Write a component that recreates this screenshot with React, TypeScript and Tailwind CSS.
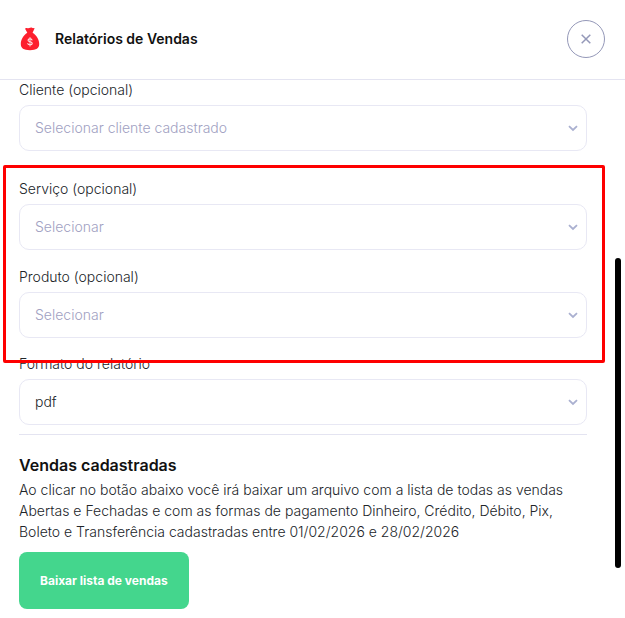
import { useState } from "react";

interface Field {
  id: string;
  label: string;
  placeholder?: string;
  options: string[];
}

const cliente: Field = {
  id: "cliente",
  label: "Cliente (opcional)",
  placeholder: "Selecionar cliente cadastrado",
  options: [],
};

const filtros: Field[] = [
  {
    id: "servico",
    label: "Serviço (opcional)",
    placeholder: "Selecionar",
    options: [],
  },
  {
    id: "produto",
    label: "Produto (opcional)",
    placeholder: "Selecionar",
    options: [],
  },
];

const formato: Field = {
  id: "formato",
  label: "Formato do relatório",
  options: ["pdf"],
};

const MoneyBag = () => (
  <svg viewBox="0 0 20 24" className="w-5 h-6 shrink-0" aria-hidden="true">
    <path
      fill="#fd1f2e"
      d="M5.6 1.2C7 .5 8 1.5 9.2 1.1c1.1-.4 1.8-.9 2.8-.3.6.3 1.1.5 1.900.2.5-.1.8.3.5.8l-1.800 4c4 2.600 6.600 7 6.600 11.200 0 4.200-2.900 6.200-9.200 6.200S.8 21.200.8 17c0-4.200 2.600-8.600 6.500-11.200L5.200 2c-.2-.4 0-.7.4-.8z"
    />
    <g fill="none" stroke="#ffe3e5" strokeWidth="1.100" strokeLinecap="round">
      <path d="M12 12.900c-.4-.7-1.100-1-2-1-1.200 0-2 .5-2 1.400 0 2.100 4.200.9 4.200 3 0 1-.9 1.500-2.200 1.500-1 0-1.800-.4-2.200-1.100" />
      <path d="M10 10.500v8.600" strokeWidth="0.900" />
    </g>
  </svg>
);

const SelectField = ({ id, label, placeholder, options }: Field) => {
  const [value, setValue] = useState(placeholder ? "" : options[0]);

  return (
    <div>
      <label htmlFor={id} className="block mb-[5px] leading-[21px]">
        {label}
      </label>
      <div className="grid items-center">
        <select
          id={id}
          value={value}
          onChange={(e) => setValue(e.target.value)}
          className={`col-start-1 row-start-1 w-full h-[46px] appearance-none rounded-[10px] border border-[#e8e8f4] bg-white px-[15px] text-sm ${
            value ? "text-[#212529]" : "text-[#a1a1c2]"
          }`}
        >
          {placeholder && <option value="">{placeholder}</option>}
          {options.map((option) => (
            <option key={option} value={option}>
              {option}
            </option>
          ))}
        </select>
        <svg
          viewBox="0 0 10 7"
          className="col-start-1 row-start-1 justify-self-end mr-[9px] w-[10px] h-[7px] pointer-events-none"
          fill="none"
          stroke="#aab0d0"
          strokeWidth="1.800"
          aria-hidden="true"
        >
          <path d="M1 1.200l4 3.800 4-3.800" />
        </svg>
      </div>
    </div>
  );
};

const App = () => {
  return (
    <div className="relative min-h-screen bg-white font-[Inter,sans-serif] text-sm font-light text-[#212529]">
      <header className="flex items-center h-20 px-5 pb-0.5 border-b border-[#e4e4f1]">
        <MoneyBag />
        <h1 className="ml-[15px] text-sm font-semibold text-[#111]">
          Relatórios de Vendas
        </h1>
        <button
          type="button"
          aria-label="Fechar"
          className="ml-auto flex items-center justify-center size-[38px] rounded-full border border-[#9498b8]"
        >
          <svg
            viewBox="0 0 10 10"
            className="size-[10px]"
            stroke="#9498b8"
            strokeWidth="1.500"
            aria-hidden="true"
          >
            <path d="M.7.7l8.600 8.600M9.300.7L.7 9.300" />
          </svg>
        </button>
      </header>

      <main className="-mt-px pl-[19px] pr-[38px] pb-[9px]">
        <SelectField {...cliente} />

        <div className="relative mt-[27px] mb-[15px] flex flex-col gap-4">
          {filtros.map((filtro) => (
            <SelectField key={filtro.id} {...filtro} />
          ))}
          <div className="absolute -top-[13px] -bottom-[25px] -left-4 -right-[18px] border-3 border-[#fe0000] rounded-[2px] pointer-events-none" />
        </div>

        <SelectField {...formato} />

        <hr className="mt-[9px] border-[#e4e4f1]" />

        <section className="mt-[18px]">
          <h2 className="text-base leading-6 font-semibold text-[#111]">
            Vendas cadastradas
          </h2>
          <p className="mt-0.5 leading-[21px]">
            Ao clicar no botão abaixo você irá baixar um arquivo com a lista de
            todas as vendas Abertas e Fechadas e com as formas de pagamento
            Dinheiro, Crédito, Débito, Pix, Boleto e Transferência cadastradas
            entre 01/02/2026 e 28/02/2026
          </p>
          <button
            type="button"
            className="mt-[10px] h-[57px] px-[21px] rounded-lg bg-[#44d68d] text-xs font-bold text-white"
          >
            Baixar lista de vendas
          </button>
        </section>
      </main>

      <div className="absolute top-[258px] right-[4px] w-[6px] h-[310px] rounded-full bg-black" />
    </div>
  );
};

export default App;
